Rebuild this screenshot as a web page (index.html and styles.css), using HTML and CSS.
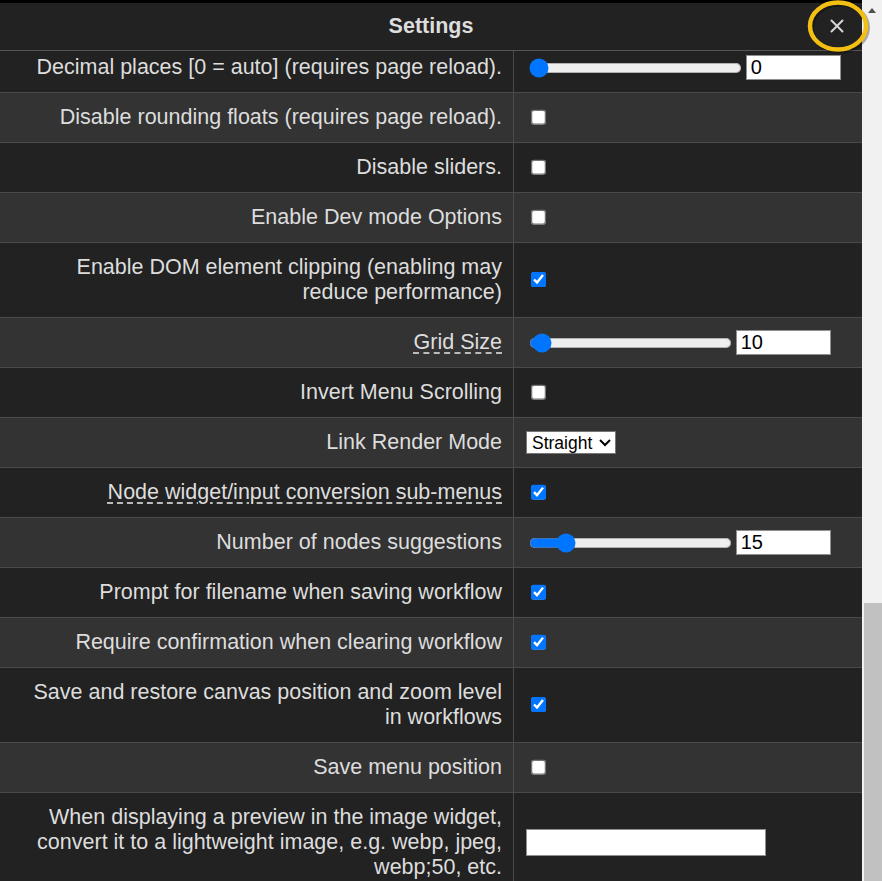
FILE: index.html
```html
<!DOCTYPE html>
<html lang="en">
<head>
<meta charset="utf-8">
<title>Settings</title>
<link rel="stylesheet" href="styles.css">
</head>
<body>
<div class="screen">
  <div class="dialog">
    <header class="dlg-head">
      <h1>Settings</h1>
      <button class="close" aria-label="Close">
        <svg width="14" height="14" viewBox="0 0 14 14"><path d="M1.5 1.5 L12.5 12.5 M12.5 1.5 L1.5 12.5" stroke="#d6d6d6" stroke-width="2" stroke-linecap="round"/></svg>
      </button>
    </header>
    <div class="rows">
      <div class="row">
        <div class="label">Decimal places [0 = auto] (requires page reload).</div>
        <div class="ctl"><input class="range r-wide" type="range" min="0" max="15" value="0"><input class="num" type="text" value="0"></div>
      </div>
      <div class="row">
        <div class="label">Disable rounding floats (requires page reload).</div>
        <div class="ctl"><input class="check" type="checkbox"></div>
      </div>
      <div class="row">
        <div class="label">Disable sliders.</div>
        <div class="ctl"><input class="check" type="checkbox"></div>
      </div>
      <div class="row">
        <div class="label">Enable Dev mode Options</div>
        <div class="ctl"><input class="check" type="checkbox"></div>
      </div>
      <div class="row">
        <div class="label">Enable DOM element clipping (enabling may reduce performance)</div>
        <div class="ctl"><input class="check" type="checkbox" checked></div>
      </div>
      <div class="row">
        <div class="label"><span class="hint">Grid Size</span></div>
        <div class="ctl"><input class="range" type="range" min="1" max="500" value="10"><input class="num" type="text" value="10"></div>
      </div>
      <div class="row">
        <div class="label">Invert Menu Scrolling</div>
        <div class="ctl"><input class="check" type="checkbox"></div>
      </div>
      <div class="row">
        <div class="label">Link Render Mode</div>
        <div class="ctl"><select class="sel"><option>Straight</option><option>Linear</option><option>Spline</option><option>Hidden</option></select></div>
      </div>
      <div class="row">
        <div class="label"><span class="hint">Node widget/input conversion sub-menus</span></div>
        <div class="ctl"><input class="check" type="checkbox" checked></div>
      </div>
      <div class="row">
        <div class="label">Number of nodes suggestions</div>
        <div class="ctl"><input class="range" type="range" min="0" max="100" value="15"><input class="num" type="text" value="15"></div>
      </div>
      <div class="row">
        <div class="label">Prompt for filename when saving workflow</div>
        <div class="ctl"><input class="check" type="checkbox" checked></div>
      </div>
      <div class="row">
        <div class="label">Require confirmation when clearing workflow</div>
        <div class="ctl"><input class="check" type="checkbox" checked></div>
      </div>
      <div class="row">
        <div class="label">Save and restore canvas position and zoom level in workflows</div>
        <div class="ctl"><input class="check" type="checkbox" checked></div>
      </div>
      <div class="row">
        <div class="label">Save menu position</div>
        <div class="ctl"><input class="check" type="checkbox"></div>
      </div>
      <div class="row">
        <div class="label">When displaying a preview in the image widget, convert it to a lightweight image, e.g. webp, jpeg, webp;50, etc.</div>
        <div class="ctl"><input class="text" type="text" value=""></div>
      </div>
    </div>
  </div>
  <div class="scrollbar">
    <span class="arrow"></span>
    <span class="thumb"></span>
  </div>
  <svg class="ring" width="70" height="60" viewBox="0 0 70 60">
    <ellipse cx="33.5" cy="27.5" rx="28" ry="23.5" fill="none" stroke="rgba(0,0,0,0.3)" stroke-width="5"/>
    <ellipse cx="32" cy="26" rx="28" ry="23.5" fill="none" stroke="#f2bf12" stroke-width="4.5"/>
  </svg>
</div>
</body>
</html>
```
FILE: styles.css
```css
html, body {
  margin: 0;
  height: 100%;
  background: #000;
  overflow: hidden;
}

body {
  font-family: "Liberation Sans", Arial, sans-serif;
  color: #ddd;
}

.screen {
  position: relative;
  display: flex;
  height: 881px;
  padding-top: 3px;
  box-sizing: border-box;
}

.dialog {
  width: 862px;
  display: flex;
  flex-direction: column;
  overflow: hidden;
  background: #222;
}

.dlg-head {
  position: relative;
  z-index: 2;
  flex: none;
  height: 47px;
  background: #222;
  border-bottom: 1px solid #555;
  display: flex;
  align-items: center;
  justify-content: center;
}

.dlg-head h1 {
  margin: 0;
  font-size: 21.5px;
  font-weight: bold;
  color: #ddd;
}

.close {
  position: absolute;
  right: 10px;
  top: 4px;
  width: 30px;
  height: 38px;
  padding: 0;
  border: 0;
  background: transparent;
  display: flex;
  align-items: center;
  justify-content: center;
}

.rows {
  margin-top: -8px;
}

.row {
  display: grid;
  grid-template-columns: 514px 1fr;
  border-bottom: 1px solid #4a4a4a;
  background: #222;
}

.row:nth-child(even) {
  background: #333;
}

.label {
  box-sizing: border-box;
  border-right: 1px solid #4a4a4a;
  padding: 12px 11px 12px 20px;
  font-size: 21.5px;
  line-height: 25px;
  text-align: right;
  color: #ddd;
}

.hint {
  text-decoration: underline dashed #bbb;
  text-decoration-thickness: 1.5px;
  text-underline-offset: 3px;
}

.ctl {
  display: flex;
  align-items: center;
  padding: 0 12px;
}

.check {
  zoom: 1.25;
  margin: 3px 3px 3px 4px;
}

.range {
  zoom: 1.25;
  width: 163px;
  margin: 2px 3px 2px 2px;
}

.range.r-wide {
  width: 171px;
}

.num {
  zoom: 1.25;
  box-sizing: border-box;
  width: 76px;
  height: 20px;
  padding: 0 3px;
  border: 1px solid #8f8f8f;
  background: #fff;
  color: #000;
  font-family: "Liberation Sans", Arial, sans-serif;
  font-size: 16px;
  margin: 0;
}

.sel {
  zoom: 1.25;
  box-sizing: border-box;
  width: 72px;
  height: 19px;
  font-family: "Liberation Sans", Arial, sans-serif;
  font-size: 14px;
  margin: 0;
  background: #fff;
  color: #000;
}

.text {
  zoom: 1.25;
  box-sizing: border-box;
  width: 192px;
  height: 21.5px;
  margin: 0;
  border: 1px solid #8f8f8f;
  background: #fff;
}

.scrollbar {
  width: 20px;
  margin-top: -3px;
  background: #f1f1f1;
  display: flex;
  flex-direction: column;
}

.arrow {
  display: block;
  width: 0;
  height: 0;
  margin: 8px auto 0;
  border-left: 4px solid transparent;
  border-right: 4px solid transparent;
  border-bottom: 5px solid #505050;
}

.thumb {
  display: block;
  margin-top: auto;
  margin-left: 2px;
  height: 278px;
  background: #c1c1c1;
}

.ring {
  position: absolute;
  left: 806px;
  top: 0;
  z-index: 5;
  overflow: visible;
}
```
